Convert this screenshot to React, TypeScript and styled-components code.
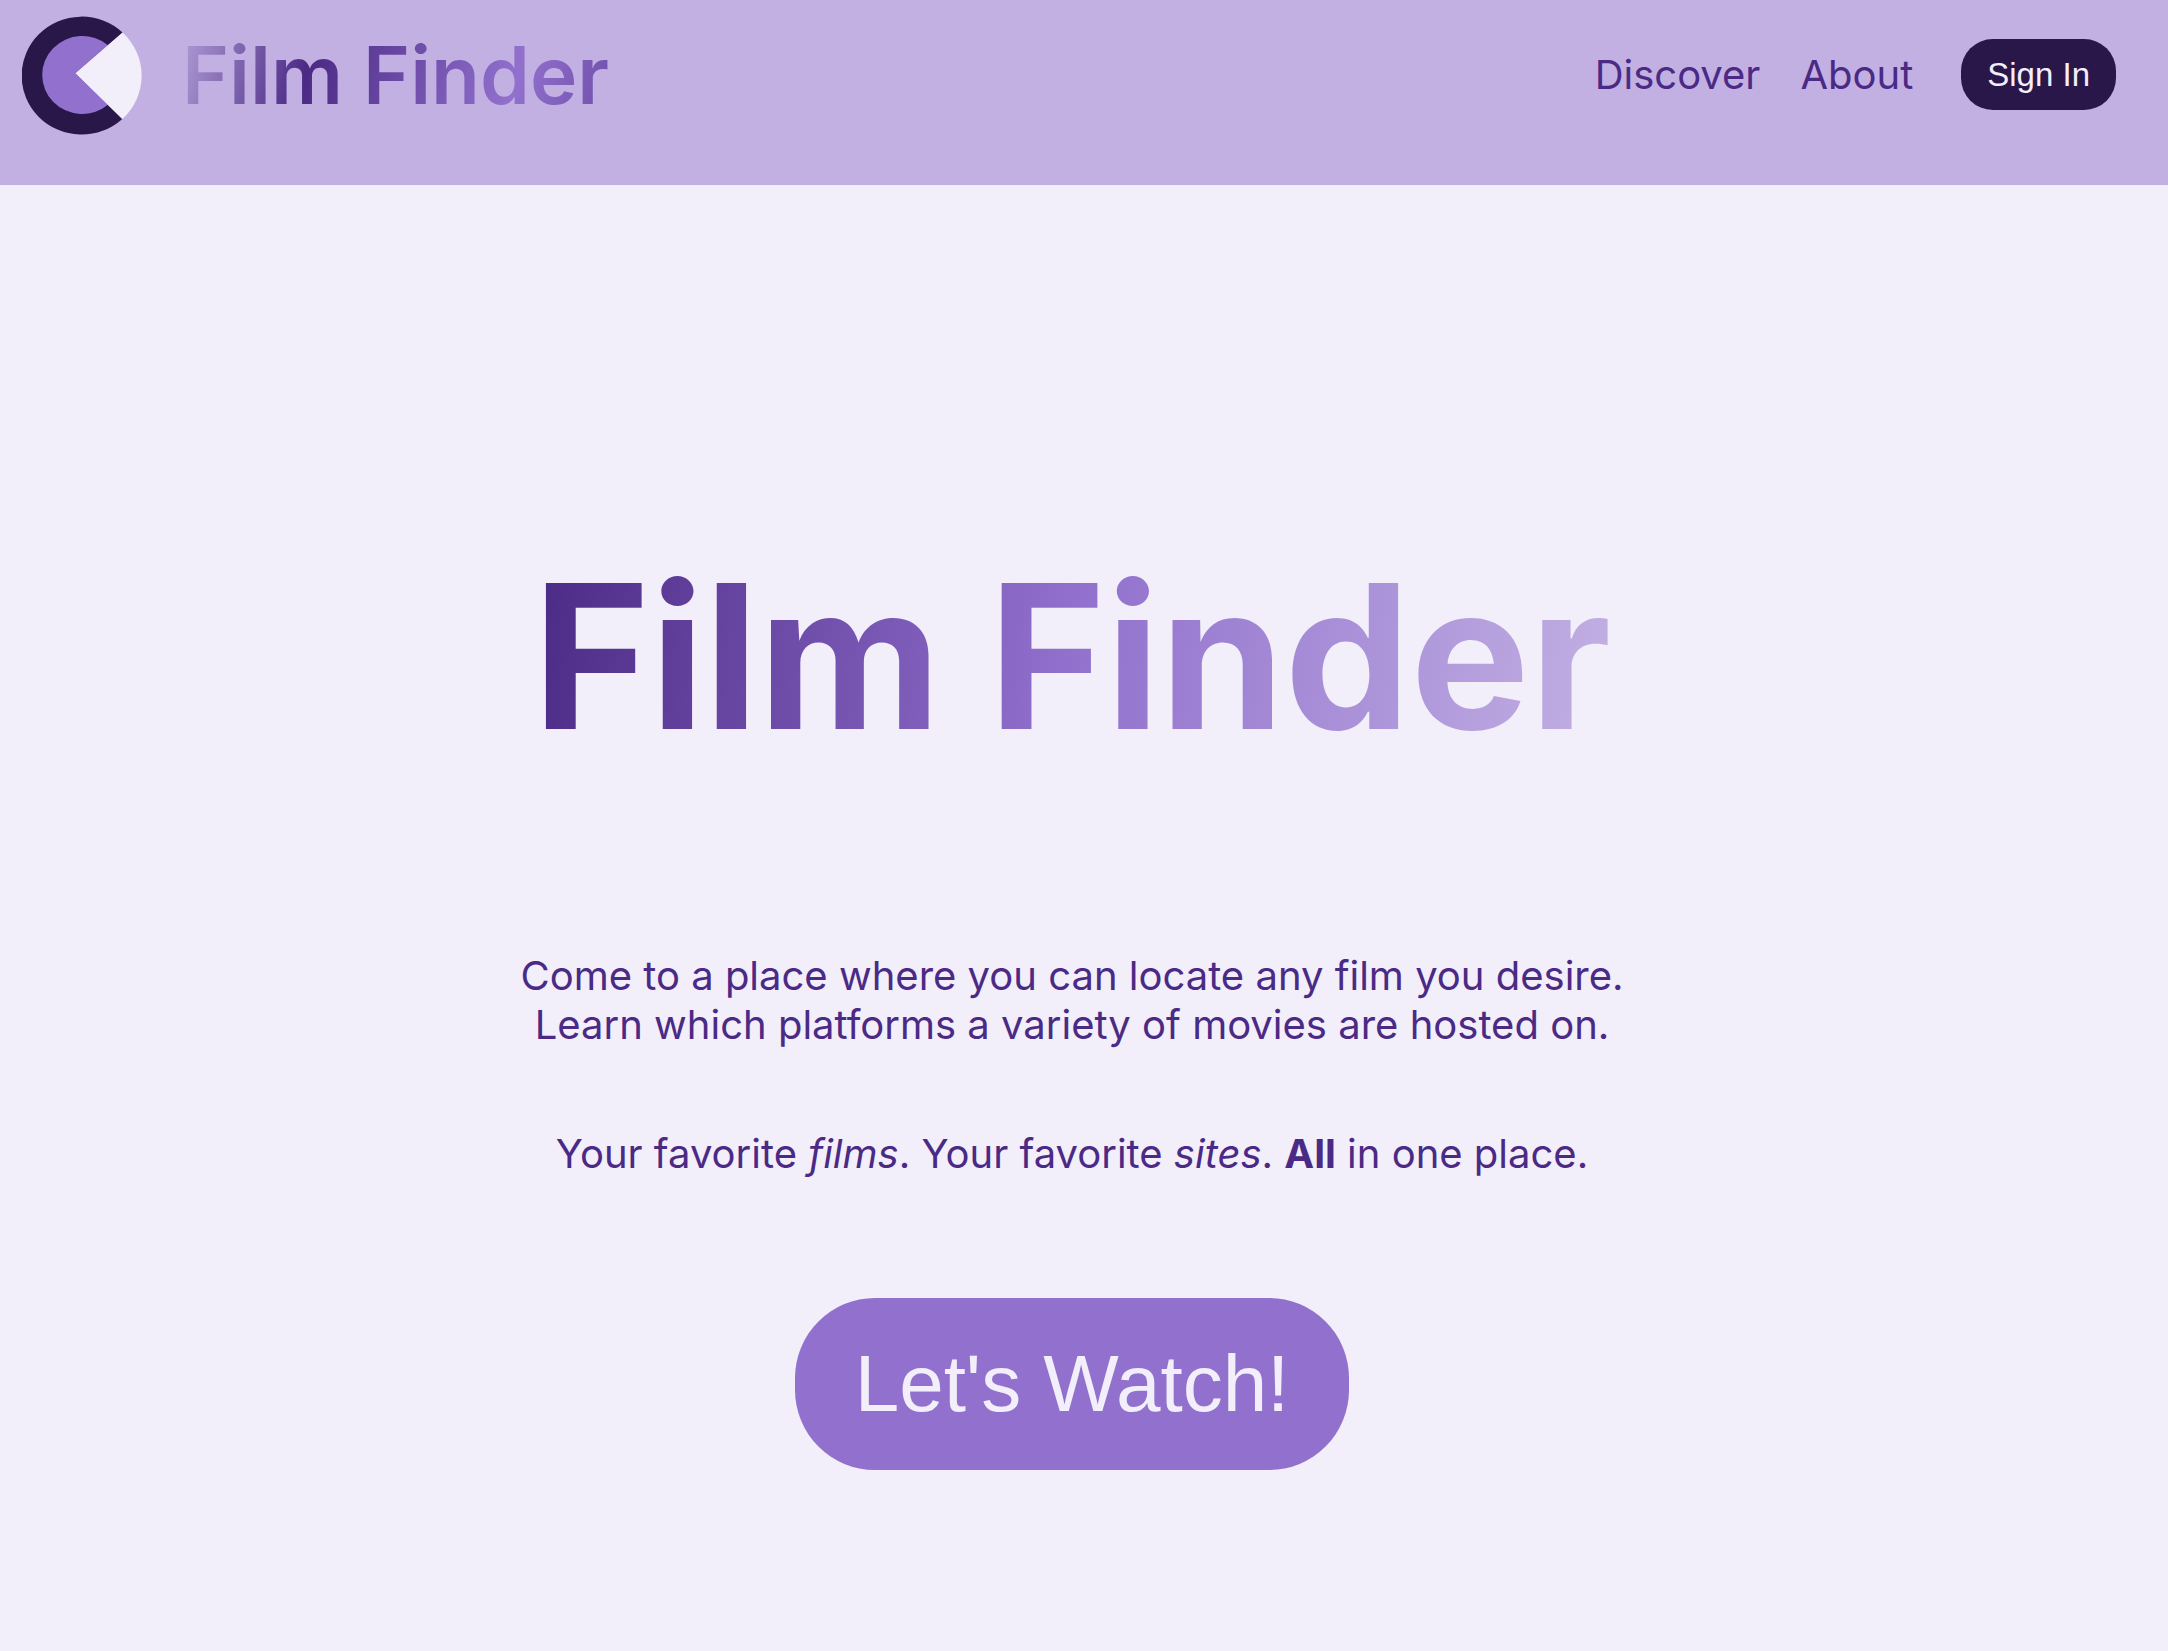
import React from 'react';
import styled, { createGlobalStyle } from 'styled-components';

const colors = {
  ink: '#29174a',
  deep: '#4b2a86',
  violet: '#9171cd',
  lilac: '#c2b0e3',
  paper: '#f2eefa',
};

const GlobalStyle = createGlobalStyle`
  * { box-sizing: border-box; }
  body {
    margin: 0;
    background: ${colors.paper};
    color: ${colors.deep};
    font-family: Inter, 'Liberation Sans', sans-serif;
    font-size: 40px;
    font-weight: 400;
  }
`;

const NavBar = styled.header`
  display: flex;
  align-items: flex-start;
  justify-content: space-between;
  height: 185px;
  padding: 16px 52px 0 22px;
  background: ${colors.lilac};
`;

const Brand = styled.a`
  display: flex;
  align-items: center;
  gap: 40px;
  height: 118px;
  text-decoration: none;
`;

const BrandName = styled.span`
  font-size: 80px;
  font-weight: 600;
  line-height: 96px;
  color: transparent;
  background: linear-gradient(105deg, ${colors.lilac} -5%, ${colors.deep} 30%, ${colors.violet} 77%, ${colors.deep} 125%);
  background-clip: text;
`;

const NavLinks = styled.nav`
  display: flex;
  align-items: center;
  gap: 48px;
  height: 117px;
`;

const LinkList = styled.div`
  display: flex;
  gap: 40px;
`;

const NavLink = styled.a`
  color: ${colors.deep};
  line-height: 48px;
  text-decoration: none;
`;

const PillButton = styled.button<{ $large?: boolean }>`
  border: 0;
  cursor: pointer;
  color: ${colors.paper};
  background: ${({ $large }) => ($large ? colors.violet : colors.ink)};
  font-family: 'Liberation Sans', Arial, sans-serif;
  font-size: ${({ $large }) => ($large ? 80 : 33)}px;
  line-height: ${({ $large }) => ($large ? 92 : 39)}px;
  padding: ${({ $large }) => ($large ? '40px 60px' : '16px 26px')};
  border-radius: ${({ $large }) => ($large ? 80 : 32)}px;
`;

const Hero = styled.main`
  display: flex;
  flex-direction: column;
  align-items: center;
  padding: 350px 24px 120px 0;
  text-align: center;
`;

const Title = styled.h1`
  margin: 0 0 174px;
  font-size: 200px;
  font-weight: 700;
  line-height: 242px;
  color: transparent;
  background: linear-gradient(97deg, ${colors.deep}, ${colors.violet} 50%, ${colors.lilac});
  background-clip: text;
`;

const Pitch = styled.div`
  display: grid;
  gap: 80px;
  margin-bottom: 120px;
`;

const Copy = styled.p`
  margin: 0;
  line-height: 49px;
`;

function Logo() {
  return (
    <svg width="120" height="120" viewBox="0 0 120 120" aria-hidden="true">
      <path d="M53.5 58.3 100.6 17.5A60 59 0 1 0 100.3 104Z" fill={colors.ink} />
      <path d="M53.5 58.3 86 30.2A40 39 0 1 0 86 89.8Z" fill={colors.violet} />
      <path d="M53.5 58.3 100.6 17.5A60 59 0 0 1 100.3 104Z" fill={colors.paper} />
    </svg>
  );
}

export default function App() {
  return (
    <>
      <GlobalStyle />
      <NavBar>
        <Brand href="#">
          <Logo />
          <BrandName>Film Finder</BrandName>
        </Brand>
        <NavLinks>
          <LinkList>
            <NavLink href="#discover">Discover</NavLink>
            <NavLink href="#about">About</NavLink>
          </LinkList>
          <PillButton type="button">Sign In</PillButton>
        </NavLinks>
      </NavBar>
      <Hero>
        <Title>Film Finder</Title>
        <Pitch>
          <Copy>
            Come to a place where you can locate any film you desire.
            <br />
            Learn which platforms a variety of movies are hosted on.
          </Copy>
          <Copy>
            Your favorite <em>films</em>. Your favorite <em>sites</em>. <strong>All</strong> in one place.
          </Copy>
        </Pitch>
        <PillButton type="button" $large>
          Let's Watch!
        </PillButton>
      </Hero>
    </>
  );
}
